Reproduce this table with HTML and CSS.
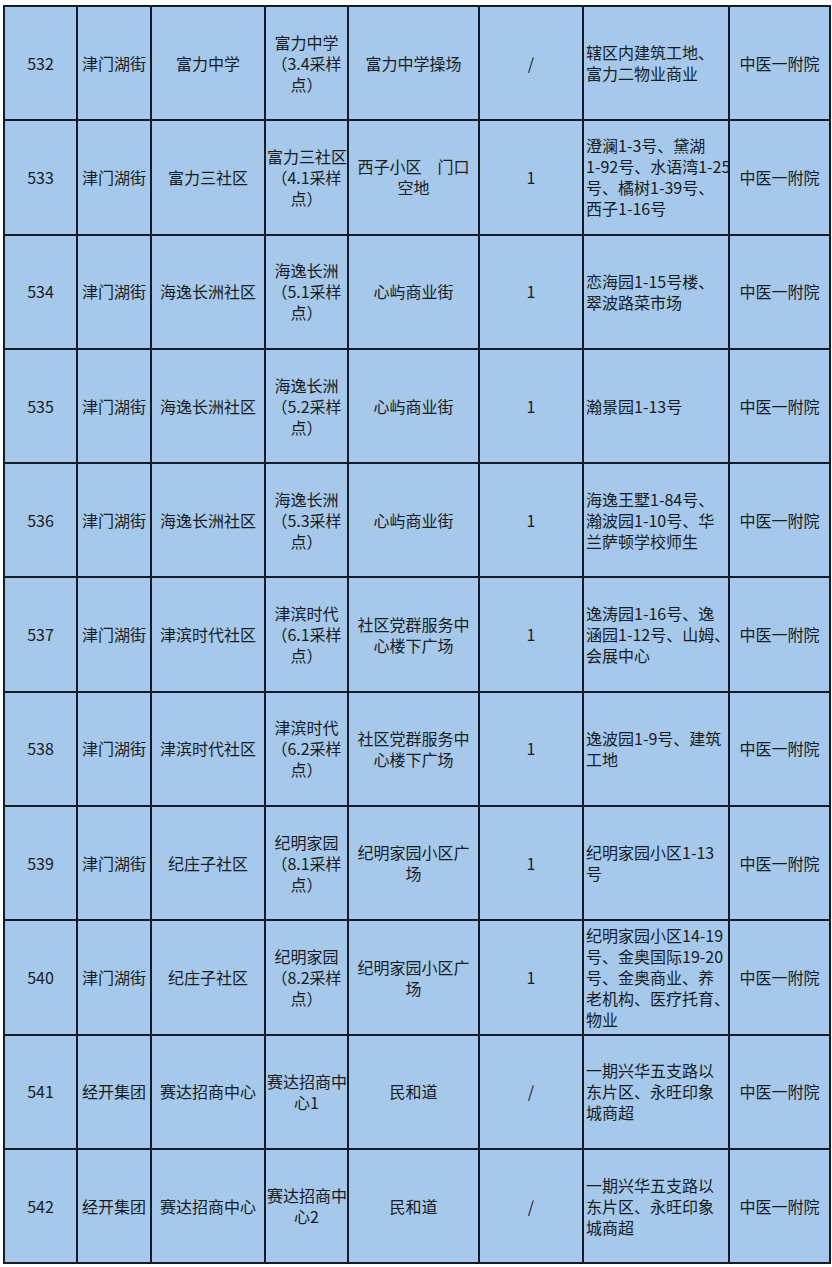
FILE: index.html
```html
<!DOCTYPE html>
<html lang="zh-CN">
<head>
<meta charset="utf-8">
<link rel="stylesheet" href="styles.css">
</head>
<body>
<table class="grid">
  <colgroup>
    <col class="c-no"><col class="c-street"><col class="c-comm"><col class="c-site"><col class="c-place"><col class="c-num"><col class="c-area"><col class="c-hosp">
  </colgroup>
  <tbody>
    <tr>
      <td>532</td><td>津门湖街</td><td>富力中学</td><td>富力中学<br>（3.4采样<br>点）</td><td>富力中学操场</td><td>/</td>
      <td class="area">辖区内建筑工地、<br>富力二物业商业</td><td>中医一附院</td>
    </tr>
    <tr>
      <td>533</td><td>津门湖街</td><td>富力三社区</td><td>富力三社区<br>（4.1采样<br>点）</td><td>西子小区　门口<br>空地</td><td>1</td>
      <td class="area">澄澜1-3号、黛湖<br>1-92号、水语湾1-25<br>号、橘树1-39号、<br>西子1-16号</td><td>中医一附院</td>
    </tr>
    <tr>
      <td>534</td><td>津门湖街</td><td>海逸长洲社区</td><td>海逸长洲<br>（5.1采样<br>点）</td><td>心屿商业街</td><td>1</td>
      <td class="area">恋海园1-15号楼、<br>翠波路菜市场</td><td>中医一附院</td>
    </tr>
    <tr>
      <td>535</td><td>津门湖街</td><td>海逸长洲社区</td><td>海逸长洲<br>（5.2采样<br>点）</td><td>心屿商业街</td><td>1</td>
      <td class="area">瀚景园1-13号</td><td>中医一附院</td>
    </tr>
    <tr>
      <td>536</td><td>津门湖街</td><td>海逸长洲社区</td><td>海逸长洲<br>（5.3采样<br>点）</td><td>心屿商业街</td><td>1</td>
      <td class="area">海逸王墅1-84号、<br>瀚波园1-10号、华<br>兰萨顿学校师生</td><td>中医一附院</td>
    </tr>
    <tr>
      <td>537</td><td>津门湖街</td><td>津滨时代社区</td><td>津滨时代<br>（6.1采样<br>点）</td><td>社区党群服务中<br>心楼下广场</td><td>1</td>
      <td class="area">逸涛园1-16号、逸<br>涵园1-12号、山姆、<br>会展中心</td><td>中医一附院</td>
    </tr>
    <tr>
      <td>538</td><td>津门湖街</td><td>津滨时代社区</td><td>津滨时代<br>（6.2采样<br>点）</td><td>社区党群服务中<br>心楼下广场</td><td>1</td>
      <td class="area">逸波园1-9号、建筑<br>工地</td><td>中医一附院</td>
    </tr>
    <tr>
      <td>539</td><td>津门湖街</td><td>纪庄子社区</td><td>纪明家园<br>（8.1采样<br>点）</td><td>纪明家园小区广<br>场</td><td>1</td>
      <td class="area">纪明家园小区1-13<br>号</td><td>中医一附院</td>
    </tr>
    <tr>
      <td>540</td><td>津门湖街</td><td>纪庄子社区</td><td>纪明家园<br>（8.2采样<br>点）</td><td>纪明家园小区广<br>场</td><td>1</td>
      <td class="area">纪明家园小区14-19<br>号、金奥国际19-20<br>号、金奥商业、养<br>老机构、医疗托育、<br>物业</td><td>中医一附院</td>
    </tr>
    <tr>
      <td>541</td><td>经开集团</td><td>赛达招商中心</td><td>赛达招商中<br>心1</td><td>民和道</td><td>/</td>
      <td class="area">一期兴华五支路以<br>东片区、永旺印象<br>城商超</td><td>中医一附院</td>
    </tr>
    <tr>
      <td>542</td><td>经开集团</td><td>赛达招商中心</td><td>赛达招商中<br>心2</td><td>民和道</td><td>/</td>
      <td class="area">一期兴华五支路以<br>东片区、永旺印象<br>城商超</td><td>中医一附院</td>
    </tr>
  </tbody>
</table>
</body>
</html>
```

FILE: styles.css
```css
html, body {
  margin: 0;
  padding: 0;
  background: #ffffff;
}

body {
  padding: 5px 0 0 3px;
  font-family: "Noto Sans CJK SC", "Noto Sans", sans-serif;
  color: #161c24;
}

.grid {
  border-collapse: collapse;
  table-layout: fixed;
  width: 826px;
  background: #a6c8ea;
}

.c-no { width: 73px; }
.c-street { width: 74px; }
.c-comm { width: 114px; }
.c-site { width: 83px; }
.c-place { width: 131px; }
.c-num { width: 104px; }
.c-area { width: 146px; }
.c-hosp { width: 101px; }

.grid td {
  border: 2px solid #151d29;
  height: 114.3px;
  padding: 0 1px;
  box-sizing: border-box;
  text-align: center;
  vertical-align: middle;
  font-size: 16px;
  line-height: 21px;
  white-space: nowrap;
  overflow: hidden;
}

.grid td.area {
  text-align: left;
  padding: 0 0 0 2px;
}
```
